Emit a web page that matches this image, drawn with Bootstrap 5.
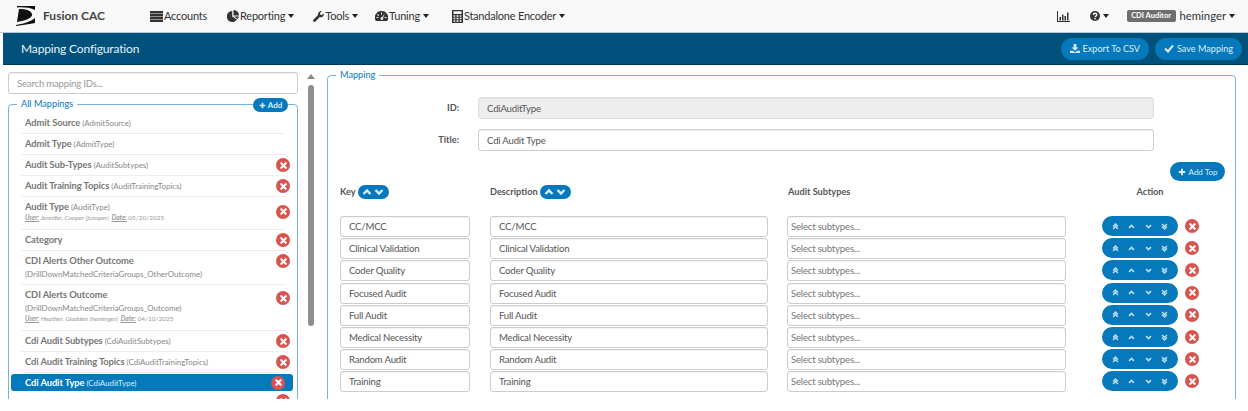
<!DOCTYPE html>
<html lang="en">
<head>
    <meta charset="UTF-8">
    <meta name="viewport" content="width=device-width, initial-scale=1.0">
    <title>Mapping Configuration</title>
    <link href="https://cdn.jsdelivr.net/npm/bootstrap@5.3.0/dist/css/bootstrap.min.css" rel="stylesheet">
    <style>
        body { font-family: Lato, "Open Sans", sans-serif; font-size: 9.2px; color: #555; background: #fff; overflow: hidden; }
        svg { display: inline-block; fill: currentColor; flex: none; }
        .topbar { height: 33px; background: #f8f8f8; border-bottom: 1px solid #b9c9d3; padding: 0 13px 0 16px; color: #333; font-size: 11px; letter-spacing: -.22px; }
        .brand { width: 134px; gap: 7px; font-size: 12px; font-weight: 700; color: #444; letter-spacing: 0; }
        .topbar .item { color: #333; text-decoration: none; gap: 1px; white-space: nowrap; }
        .caret { width: 0; height: 0; border-top: 4px solid #222; border-left: 3.5px solid transparent; border-right: 3.5px solid transparent; margin-left: 2px; }
        .role { background: #6e6e6e; color: #fff; font-size: 7.5px; font-weight: 700; border-radius: 2px; width: 49px; height: 12px; line-height: 12px; text-align: center; margin-right: 4px; letter-spacing: 0; }
        .user { font-size: 11.3px; letter-spacing: 0; }
        .titlebar { height: 32px; margin-left: 3px; background: #00527c; border-bottom: 1px solid #003a58; color: #e8f1f6; padding: 0 6px 0 18px; font-size: 12px; letter-spacing: -.15px; }
        .title-actions { height: 22px; gap: 6px; }
        .btn-round { background: #0679bc; color: #dcedf7; border: 0; border-radius: 12px; font-size: 9.1px; gap: 3px; padding: 0 9px; letter-spacing: 0; }
        .btn-round:hover { background: #056aa6; color: #fff; }
        .workspace { height: 334px; overflow: hidden; padding: 7px 12px 0 8px; }
        .side { width: 290px; }
        .search { height: 22px; font-size: 8.8px; padding: 0 8px; border-radius: 2px; border-color: #ccc; margin-bottom: 9px; }
        .search::placeholder { color: #999; }
        fieldset.box { border: 1px solid #74b5da; border-radius: 4px; margin: 0; min-width: 0; }
        fieldset.box legend { float: none; width: auto; font-size: 9.2px; font-weight: 400; color: #0679bc; padding: 0 4px; line-height: 12px; }
        .side .box { position: relative; padding: 0 3px; height: 320px; margin-top: -5px; }
        .side .box legend { margin: 0 0 0 5px; }
        .add-all { position: absolute; right: 9px; top: -12px; width: 35px; height: 14px; padding: 0; gap: 2px; font-size: 8px; font-weight: 700; justify-content: center; }
        #mapList { padding-top: 3px; }
        .map-row { margin: 0 9px; padding: 3px 0 3px 4px; border-bottom: 1px solid #eee; min-height: 21px; color: #888; font-size: 7.9px; line-height: 13px; }
        .map-row.tall { padding-bottom: 6px; }
        .map-row.top { align-items: flex-start !important; }
        .map-row.raised .del { margin-bottom: 16px; }
        .map-row b { font-size: 9.4px; letter-spacing: -.1px; color: #777; }
        .map-row small { display: block; font-size: 6.5px; line-height: 10px; font-style: italic; color: #999; margin-top: -1px; }
        .map-row small u { font-weight: 700; }
        .map-row small span { font-style: normal; }
        .map-row .del { margin-right: -5px; }
        .map-row.active { background: #0679bc; color: #dcedf7; border-radius: 3px; margin: 1px 1px 0 -1px; padding: 1px 4px 1px 14px; min-height: 17px; border: 0; }
        .map-row.active b { color: #fff; }
        .map-row.active .del { margin-right: 4px; }
        .del { width: 14px; height: 14px; border-radius: 50%; background: #d9534f; color: #fff; }
        .scroll { width: 10px; margin: 0 11px 0 8px; }
        .scroll i { display: block; width: 0; height: 0; border-bottom: 5px solid #8a8a8a; border-left: 4px solid transparent; border-right: 4px solid transparent; margin: 2px auto 6px 1px; }
        .scroll em { display: block; width: 6px; height: 241px; margin-left: 2px; background: #8f8f8f; border-radius: 3px; }
        .main .box { padding: 0 12px; height: 340px; margin-top: -3px; position: relative; }
        .main .box legend { margin: 0 0 0 -4px; }
        .field-row { gap: 19px; margin-bottom: 10px; padding-right: 69px; }
        .field-row label { width: 119px; text-align: right; font-weight: 700; color: #555; font-size: 9.2px; }
        .field-row .form-control { flex: 1; }
        .form-control { height: 22px; padding: 0 8px; font-size: 9.6px; letter-spacing: -.2px; color: #555; border-radius: 3px; border-color: #ccc; box-shadow: inset 0 1px 1px rgba(0,0,0,.05); }
        .form-control:disabled { background: #eee; border-color: #ddd; }
        .sel::placeholder { color: #777; }
        .sel { padding: 0 3px; margin-left: -1px; }
        .add-top { position: absolute; right: 10px; top: 81px; height: 19px; width: 55px; padding: 0; gap: 3px; font-size: 8px; justify-content: center; }
        .grid { display: grid; grid-template-columns: 130px 278px 279px 1fr; column-gap: 20px; margin-top: 32px; }
        .grid .head { height: 33px; padding-top: 2px; line-height: 14px; font-weight: 700; color: #555; gap: 2px; font-size: 9.2px; }
        .grid .cell { height: 22.2px; }
        .grid .cell .form-control { height: 21px; }
        .head-action { padding-right: 10px; text-align: center; }
        .updown { background: #0679bc; color: #dcedf7; border-radius: 7px; height: 14px; width: 31px; justify-content: space-around; padding: 0 3px; }
        .action { gap: 7px; margin-left: 15px; padding-bottom: 2px; }
        .mover { width: 76px; height: 20px; background: #0679bc; color: #b9dcf0; border-radius: 10px; justify-content: space-around; padding: 0 5px; }
    </style>
</head>
<body>
    <svg width="0" height="0" class="position-absolute">
        <symbol id="i-x" viewBox="0 0 10 10"><path d="M2.500 2.500l5 5M7.500 2.500l-5 5" stroke="currentColor" stroke-width="2.400" fill="none" stroke-linecap="round"/></symbol>
        <symbol id="i-plus" viewBox="0 0 10 10"><path d="M5 1v8M1 5h8" stroke="currentColor" stroke-width="2.400" fill="none"/></symbol>
        <symbol id="i-up" viewBox="0 0 10 10"><path d="M1.500 7L5 3.500 8.500 7" stroke="currentColor" stroke-width="2.400" fill="none"/></symbol>
        <symbol id="i-down" viewBox="0 0 10 10"><path d="M1.500 3L5 6.500 8.500 3" stroke="currentColor" stroke-width="2.400" fill="none"/></symbol>
        <symbol id="i-top" viewBox="0 0 10 10"><path d="M1.500 5L5 1.500 8.500 5M1.500 8.500L5 5 8.500 8.500" stroke="currentColor" stroke-width="2.200" fill="none"/></symbol>
        <symbol id="i-bottom" viewBox="0 0 10 10"><path d="M1.500 1.500L5 5l3.500-3.500M1.500 5L5 8.500 8.500 5" stroke="currentColor" stroke-width="2.200" fill="none"/></symbol>
    </svg>

    <nav class="topbar d-flex align-items-center">
        <div class="brand d-flex align-items-center">
            <svg width="20" height="20" viewBox="0 0 20 20"><path d="M1 0h18v4C14 1.500 7 1 1 1.500zM3 3c6 0 12 1 13 5 .5 2.500-2 4-5 5.500-3 1.200-7 2-10 2.500z" fill="#111"/><path d="M0 19c6-1 14-3 19-7v5c-5 1-12 2-19 3z" fill="#111"/></svg>
            Fusion CAC
        </div>
        <a class="item d-flex align-items-center" href="#" style="margin-right:20px">
            <svg width="13" height="11" viewBox="0 0 13 11"><path d="M0 0h13v2.400H0zM0 3h13v2.200H0zM0 5.800h13V8H0zM0 8.600h13V11H0z"/></svg>Accounts
        </a>
        <a class="item d-flex align-items-center" href="#" style="margin-right:19px">
            <svg width="12" height="12" viewBox="0 0 12 12"><path d="M5.200 1v5.600l4.700 2.900A5.500 5.500 0 1 1 5.200 1zM6.500 0a5.500 5.500 0 0 1 5.500 5.500H6.500zM7 6.500h5a5.600 5.600 0 0 1-1.500 2.500z"/></svg>Reporting<span class="caret"></span>
        </a>
        <a class="item d-flex align-items-center" href="#" style="margin-right:17px">
            <svg width="11" height="11" viewBox="0 0 11 11"><path d="M10.800 2.600c.4 1.800-.8 3.500-2.600 3.700-.6 0-1-.1-1.400-.2L2.500 10.500c-.6.600-1.500.6-2 0s-.6-1.400 0-2l4.400-4.300C4.700 2 6.500-.3 8.800.1L6.900 2.200l.5 1.500 1.500.4z"/></svg>Tools<span class="caret"></span>
        </a>
        <a class="item d-flex align-items-center" href="#" style="margin-right:23px">
            <svg width="13" height="11" viewBox="0 0 13 11"><path fill-rule="evenodd" d="M6.500 0a6.500 6.500 0 0 1 5.600 10H.9A6.500 6.500 0 0 1 6.500 0zM6 1.500v2h1v-2zM2.800 3l-.7.700 1.300 1.300.7-.7zM1.500 6v1h2V6zm8 0v1h2V6zM9.800 2.600L7 6.300a1.300 1.300 0 1 0 1 .6z"/></svg>Tuning<span class="caret"></span>
        </a>
        <a class="item d-flex align-items-center" href="#">
            <svg width="11" height="13" viewBox="0 0 11 13"><path fill-rule="evenodd" d="M0 0h11v13H0zM1.500 1.300v2.700h8V1.300zM1.500 5.200v1.500h1.800V5.200zm3 0v1.500h2V5.200zm3.200 0v1.500h1.800V5.200zM1.500 7.800v1.500h1.800V7.800zm3 0v1.500h2V7.800zm3.200 0v1.500h1.800V7.800zM1.500 10.300v1.400h1.800v-1.400zm3 0v1.400h2v-1.400zm3.200 0v1.400h1.800v-1.400z"/></svg>Standalone Encoder<span class="caret"></span>
        </a>
        <a class="item d-flex align-items-center ms-auto" href="#" style="margin-right:20px">
            <svg width="13" height="11" viewBox="0 0 13 11"><path d="M0 0h1v10h12v1H0zM2.500 6h1.500v3.500H2.500zM5 3.500h1.500v6H5zM7.500 5h1.500v4.500H7.500zM10 1.500h1.500v8H10z"/></svg>
        </a>
        <a class="item d-flex align-items-center" href="#" style="margin-right:18px">
            <svg width="10" height="10" viewBox="0 0 10 10"><circle cx="5" cy="5" r="5"/><path d="M3.300 3.900c0-2.200 3.500-2.200 3.500-.1 0 1.300-1.700 1.300-1.700 2.400" stroke="#f8f8f8" stroke-width="1.300" fill="none"/><rect x="4.400" y="7" width="1.400" height="1.400" fill="#f8f8f8"/></svg><span class="caret"></span>
        </a>
        <span class="role">CDI Auditor</span>
        <a class="item user d-flex align-items-center" href="#">heminger<span class="caret"></span></a>
    </nav>

    <header class="titlebar d-flex align-items-center justify-content-between">
        <span>Mapping Configuration</span>
        <div class="title-actions d-flex">
            <button class="btn btn-round d-flex align-items-center">
                <svg width="10" height="9" viewBox="0 0 11 10"><path d="M4 0h3v4h2.200L5.500 7.500 1.800 4H4zM0 7.500h3L5.500 9.500 8 7.500h3V10H0z"/></svg>Export To CSV
            </button>
            <button class="btn btn-round d-flex align-items-center">
                <svg width="10" height="9" viewBox="0 0 10 9"><path d="M1 4.500l3 3 5-6" stroke="currentColor" stroke-width="2" fill="none"/></svg>Save Mapping
            </button>
        </div>
    </header>

    <div class="workspace d-flex">
        <aside class="side flex-none">
            <input class="form-control search" placeholder="Search mapping IDs...">
            <fieldset class="box">
                <legend>All Mappings</legend>
                <button class="btn btn-round add-all d-flex align-items-center"><svg width="7" height="7"><use href="#i-plus"/></svg>Add</button>
                <div id="mapList"></div>
            </fieldset>
        </aside>
        <div class="scroll flex-none"><i></i><em></em></div>
        <main class="main flex-grow-1">
            <fieldset class="box">
                <legend>Mapping</legend>
                <div class="field-row d-flex align-items-center" style="margin-top:16px">
                    <label>ID:</label><input class="form-control" value="CdiAuditType" disabled>
                </div>
                <div class="field-row d-flex align-items-center">
                    <label>Title:</label><input class="form-control" value="Cdi Audit Type">
                </div>
                <button class="btn btn-round add-top d-flex align-items-center"><svg width="8" height="8"><use href="#i-plus"/></svg>Add Top</button>
                <div class="grid" id="rows">
                    <div class="head d-flex align-items-start">Key <span class="updown d-flex align-items-center"><svg width="10" height="10"><use href="#i-up"/></svg><svg width="10" height="10"><use href="#i-down"/></svg></span></div>
                    <div class="head d-flex align-items-start">Description <span class="updown d-flex align-items-center"><svg width="10" height="10"><use href="#i-up"/></svg><svg width="10" height="10"><use href="#i-down"/></svg></span></div>
                    <div class="head">Audit Subtypes</div>
                    <div class="head head-action">Action</div>
                </div>
            </fieldset>
        </main>
    </div>

    <script>
        const mapeamentos = [
            { nome: "Admit Source", id: "AdmitSource", fixo: true },
            { nome: "Admit Type", id: "AdmitType", fixo: true },
            { nome: "Audit Sub-Types", id: "AuditSubtypes" },
            { nome: "Audit Training Topics", id: "AuditTrainingTopics" },
            { nome: "Audit Type", id: "AuditType", user: "Jennifer, Cooper (jcooper)", date: "05/20/2025" },
            { nome: "Category", id: "" },
            { nome: "CDI Alerts Other Outcome", id: "DrillDownMatchedCriteriaGroups_OtherOutcome", quebra: true, topo: true },
            { nome: "CDI Alerts Outcome", id: "DrillDownMatchedCriteriaGroups_Outcome", quebra: true, alto: true, user: "Heather, Gladden (heminger)", date: "04/10/2025" },
            { nome: "Cdi Audit Subtypes", id: "CdiAuditSubtypes" },
            { nome: "Cdi Audit Training Topics", id: "CdiAuditTrainingTopics" },
            { nome: "Cdi Audit Type", id: "CdiAuditType", ativo: true },
            { nome: "", id: "" }
        ];
        const linhas = ["CC/MCC", "Clinical Validation", "Coder Quality", "Focused Audit", "Full Audit", "Medical Necessity", "Random Audit", "Training"];
        const delBtn = '<span class="del d-flex align-items-center justify-content-center flex-none"><svg width="9" height="9"><use href="#i-x"/></svg></span>';

        document.getElementById("mapList").innerHTML = mapeamentos.map(m => {
            const classes = [m.ativo ? "active" : "", m.user ? "tall" : "", m.topo ? "top" : "", m.alto ? "raised" : ""].join(" ");
            return `
            <div class="map-row d-flex align-items-center justify-content-between ${classes}">
                <div>
                    <b>${m.nome}</b>${m.quebra ? "<br>" : " "}${m.id ? `(${m.id})` : ""}
                    ${m.user ? `<small><u>User:</u> ${m.user} &nbsp;<u>Date:</u> <span>${m.date}</span></small>` : ""}
                </div>
                ${m.fixo ? "" : delBtn}
            </div>`;
        }).join("");

        const icones = ["i-top", "i-up", "i-down", "i-bottom"]
            .map(i => `<svg width="7" height="7"><use href="#${i}"/></svg>`).join("");

        document.getElementById("rows").insertAdjacentHTML("beforeend", linhas.map(l => `
            <div class="cell"><input class="form-control" value="${l}"></div>
            <div class="cell"><input class="form-control" value="${l}"></div>
            <div class="cell"><input class="form-control sel" placeholder="Select subtypes..."></div>
            <div class="cell action d-flex align-items-center">
                <span class="mover d-flex align-items-center">${icones}</span>${delBtn}
            </div>`).join(""));
    </script>
    <script src="https://cdn.jsdelivr.net/npm/bootstrap@5.3.0/dist/js/bootstrap.bundle.min.js"></script>
</body>
</html>
